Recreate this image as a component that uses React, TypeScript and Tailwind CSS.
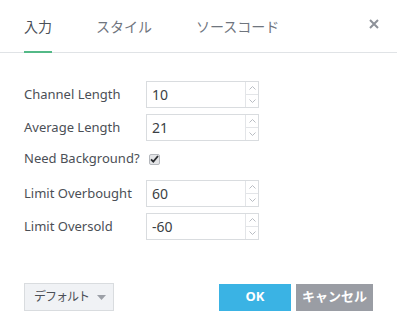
import { useState } from 'react';

const FONT = { fontFamily: '"Noto Sans", "Noto Sans CJK JP", sans-serif' };

function NumberField({ value }: { value: string }) {
  return (
    <div className="flex h-[27px] w-[113px] border border-[#d9dcdf] bg-white">
      <input
        defaultValue={value}
        className="min-w-0 flex-1 pl-[5px] text-[14px] text-[#3b3f45] outline-none"
      />
      <div className="flex w-[13px] flex-col border-l border-[#e3e5e8]">
        <div className="flex flex-1 items-center justify-center border-b border-[#e3e5e8]">
          <svg width="7" height="4" viewBox="0 0 7 4" fill="none" stroke="#b9bdc3" strokeWidth="1">
            <path d="M0.5 3.5 L3.5 0.5 L6.5 3.5" />
          </svg>
        </div>
        <div className="flex flex-1 items-center justify-center">
          <svg width="7" height="4" viewBox="0 0 7 4" fill="none" stroke="#b9bdc3" strokeWidth="1">
            <path d="M0.5 0.5 L3.5 3.5 L6.5 0.5" />
          </svg>
        </div>
      </div>
    </div>
  );
}

export default function App() {
  const [tab, setTab] = useState(0);
  const [bg, setBg] = useState(true);
  const tabs = ['入力', 'スタイル', 'ソースコード'];

  return (
    <div className="relative h-[335px] w-[397px] bg-white text-[#4b4f56]" style={FONT}>
      {/* header tabs */}
      <div className="flex h-[53px] items-stretch border-b border-[#e0e3e6] pl-[24px] pr-[18px]">
        <div className="flex gap-[44px]">
          {tabs.map((t, i) => (
            <button
              key={t}
              onClick={() => setTab(i)}
              className={`relative flex items-center pt-[1px] text-[14px] ${i === tab ? 'text-[#4b5058]' : 'text-[#6f757e]'}`}
            >
              {t}
              {i === tab && <span className="absolute bottom-[-1px] left-0 right-0 h-[2px] bg-[#53b987]" />}
            </button>
          ))}
        </div>
        <button className="ml-auto flex items-center pb-[5px]">
          <svg width="10" height="10" viewBox="0 0 10 10" stroke="#8d9199" strokeWidth="2">
            <path d="M1 1 L9 9 M9 1 L1 9" />
          </svg>
        </button>
      </div>

      {/* fields */}
      <div className="flex flex-col pl-[24px] pt-[28px] text-[13px] text-[#4b4f56]">
        <div className="flex h-[27px] items-center">
          <span className="w-[122px]">Channel Length</span>
          <NumberField value="10" />
        </div>
        <div className="mt-[6px] flex h-[27px] items-center">
          <span className="w-[122px]">Average Length</span>
          <NumberField value="21" />
        </div>
        <div className="mt-[5px] flex h-[26px] items-center">
          <span className="w-[125px]">Need Background?</span>
          <button
            onClick={() => setBg(!bg)}
            className="flex h-[11px] w-[11px] items-center justify-center rounded-[2px] border border-[#b5b8bd] bg-[#e4e5e7]"
          >
            {bg && (
              <svg width="9" height="8" viewBox="0 0 9 8" fill="none" stroke="#2b2d31" strokeWidth="1.8">
                <path d="M1 4.3 L3.3 6.6 L8 1" />
              </svg>
            )}
          </button>
        </div>
        <div className="mt-[8px] flex h-[27px] items-center">
          <span className="w-[122px]">Limit Overbought</span>
          <NumberField value="60" />
        </div>
        <div className="mt-[6px] flex h-[27px] items-center">
          <span className="w-[122px]">Limit Oversold</span>
          <NumberField value="-60" />
        </div>
      </div>

      {/* footer */}
      <div className="mt-[43px] flex items-center px-[24px]">
        <button className="flex h-[28px] w-[90px] shrink-0 items-center justify-between whitespace-nowrap border border-[#d9dcdf] bg-[#f0f2f5] pl-[9px] pr-[7px] text-[12px] tracking-[-1px] text-[#4b4f56]">
          デフォルト
          <svg width="9" height="5" viewBox="0 0 9 5" fill="#9ca0a7">
            <path d="M0 0 H9 L4.5 5 Z" />
          </svg>
        </button>
        <button className="ml-auto h-[27px] w-[72px] bg-[#3ab3e4] text-[13px] font-bold text-white">
          OK
        </button>
        <button className="ml-[5px] h-[27px] w-[77px] bg-[#9a9da4] text-[13px] font-bold text-white">
          キャンセル
        </button>
      </div>
    </div>
  );
}
